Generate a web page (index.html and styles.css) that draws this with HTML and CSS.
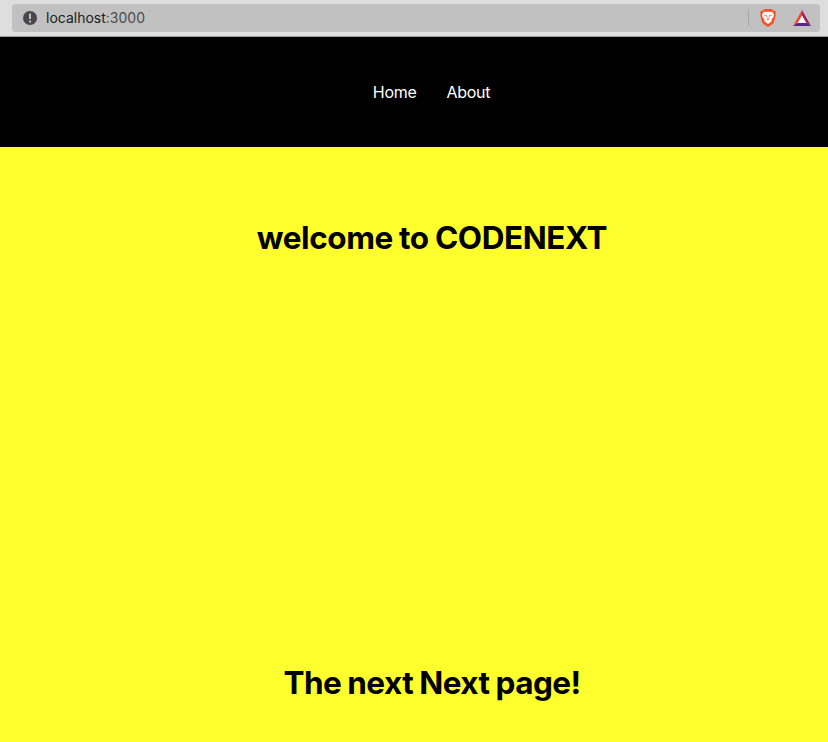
FILE: index.html
```html
<!DOCTYPE html>
<html lang="en">
<head>
<meta charset="utf-8">
<title>CODENEXT</title>
<link rel="stylesheet" href="styles.css">
</head>
<body>
<div class="toolbar">
  <div class="address">
    <svg class="info" viewBox="0 0 14 14"><circle cx="7" cy="7" r="7" fill="#474749"/><path d="M7 2.500v5.500M7 9.500v2" stroke="#c1c1c1" stroke-width="2"/></svg>
    <span class="url"><span class="host">localhost</span><span class="port">:3000</span></span>
    <span class="divider"></span>
    <svg class="shield" viewBox="0 0 16 18"><path d="M4.500 0h7l1.500 1.500 1.500 0L16 3.500l-.6 1.600.3 1.400-1.900 7L12.500 15 8 18l-4.500-3-1.300-1.500-1.900-7 .3-1.400L0 3.500l1.500-2 1.500 0z" fill="#fb4f1f"/><path d="M4 2.500l2 .5 2-.4 2 .4 2-.5 2 3-.5 2.500-2 2.500.4 1.500L8 15l-3.900-3 .4-1.500-2-2.500L2 5.500z" fill="#fff"/><path d="M4.300 6l2.400.6-.5 1.400M11.700 6l-2.400.6.5 1.400M6.500 10.700L8 10l1.500.7M8 8v2" stroke="#fb5f38" stroke-width=".9" fill="none"/></svg>
    <svg class="bat" viewBox="0 0 18 16"><path d="M9 0L0 16l5-3 4-7z" fill="#fa4328"/><path d="M9 0l9 16-5-3-4-7z" fill="#9e1f63"/><path d="M0 16h18l-5-3H5z" fill="#55258c"/><path d="M9 5.500l4.300 7.500H4.700z" fill="#fff"/></svg>
  </div>
</div>
<nav class="nav"><a>Home</a><a>About</a></nav>
<main class="page">
  <h1 class="welcome">welcome to CODENEXT</h1>
  <h1 class="subtitle">The next Next page!</h1>
</main>
</body>
</html>
```
FILE: styles.css
```css
* { box-sizing: border-box; }
body { margin: 0; height: 742px; overflow: hidden; background: #ffff2e; font-family: Inter, sans-serif; }
.toolbar { height: 37px; padding: 4px 8px 5px 12px; background: #dedede; border-bottom: 1px solid #999; }
.address { height: 28px; display: flex; align-items: center; padding: 0 9px 0 11px; border-radius: 4px; background: #c1c1c1; font-size: 14px; }
.info { width: 14px; height: 14px; margin-right: 9px; }
.url { padding-bottom: 2px; }
.host { color: #1c1c1c; }
.port { color: #4c4c4c; }
.divider { width: 1px; height: 16px; margin-left: auto; background: #a5a5a5; }
.shield { width: 16px; height: 18px; margin: 0 17px 0 11px; }
.bat { width: 18px; height: 16px; }
.nav { height: 110px; display: flex; justify-content: center; align-items: center; gap: 30px; padding-left: 35px; background: #000; color: #fff; font-size: 16px; letter-spacing: -0.3px; }
.page { height: 595px; display: flex; flex-direction: column; justify-content: space-between; align-items: center; padding: 71px 0 39px 36px; }
h1 { margin: 0; font-size: 31.5px; line-height: 40px; font-weight: 700; white-space: nowrap; word-spacing: -0.8px; }
.welcome { letter-spacing: -0.43px; }
.subtitle { letter-spacing: -0.55px; }
```
